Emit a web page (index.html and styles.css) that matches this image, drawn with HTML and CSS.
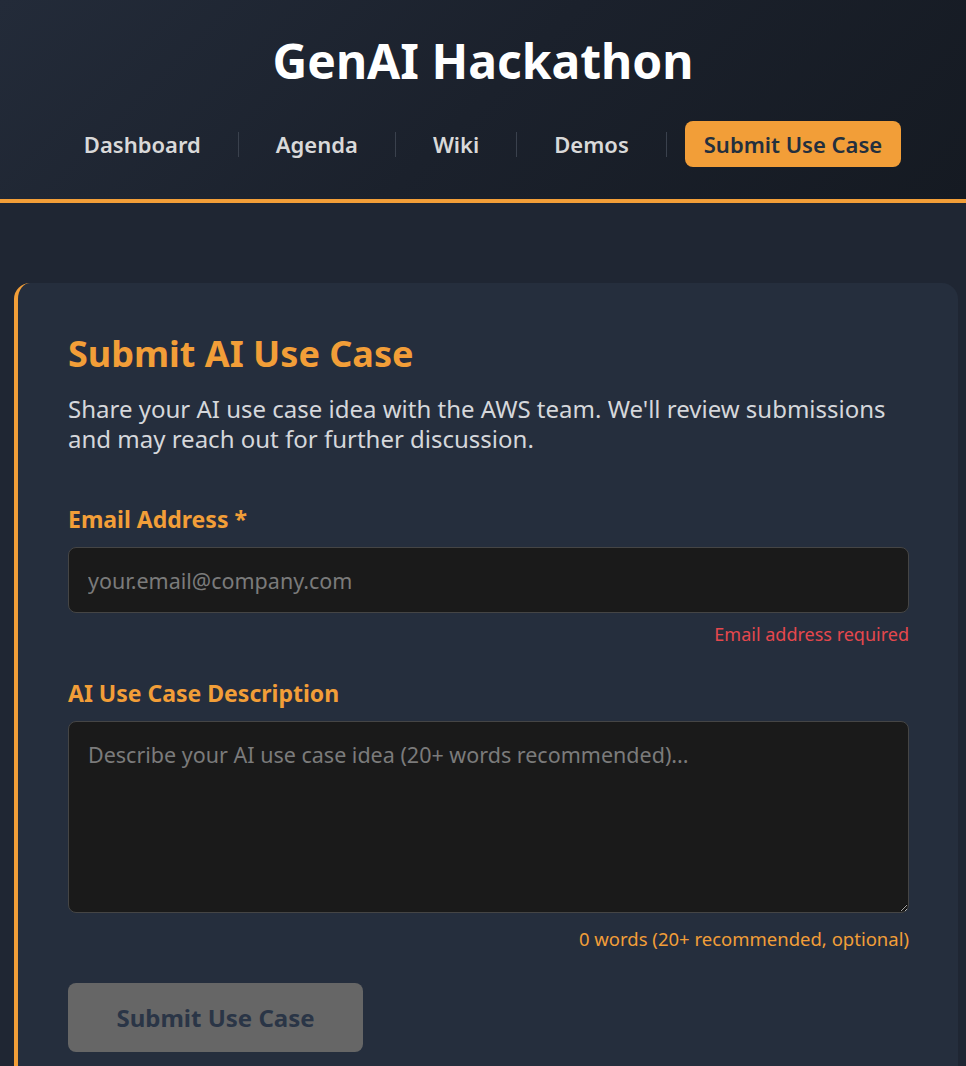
FILE: index.html
```html
<!DOCTYPE html>
<html lang="en">
<head>
<meta charset="utf-8">
<title>GenAI Hackathon - Submit Use Case</title>
<link rel="stylesheet" href="styles.css">
</head>
<body>
<header class="site-header">
  <h1 class="site-title">GenAI Hackathon</h1>
  <nav class="nav">
    <a class="nav-link" href="#">Dashboard</a>
    <span class="nav-sep"></span>
    <a class="nav-link" href="#">Agenda</a>
    <span class="nav-sep"></span>
    <a class="nav-link" href="#">Wiki</a>
    <span class="nav-sep"></span>
    <a class="nav-link" href="#">Demos</a>
    <span class="nav-sep"></span>
    <a class="nav-link nav-link-active" href="#">Submit Use Case</a>
  </nav>
</header>
<main class="main">
  <section class="card">
    <h2 class="card-title">Submit AI Use Case</h2>
    <p class="card-desc">Share your AI use case idea with the AWS team. We'll review submissions and may reach out for further discussion.</p>
    <form class="form">
      <div class="field">
        <label class="field-label" for="email">Email Address *</label>
        <input class="field-input" id="email" type="email" placeholder="your.email@company.com">
        <div class="field-hint field-error">Email address required</div>
      </div>
      <div class="field">
        <label class="field-label" for="desc">AI Use Case Description</label>
        <textarea class="field-textarea" id="desc" placeholder="Describe your AI use case idea (20+ words recommended)..."></textarea>
        <div class="field-hint field-count">0 words (20+ recommended, optional)</div>
      </div>
      <button class="submit-btn" type="button" disabled>Submit Use Case</button>
    </form>
  </section>
</main>
</body>
</html>
```
FILE: styles.css
```css
* { box-sizing: border-box; }
html, body { margin: 0; padding: 0; }
body {
  font-family: "Noto Sans", "Open Sans", sans-serif;
  background: #1f2633;
  color: #d6d8dc;
  min-height: 1066px;
}
.site-header {
  background: linear-gradient(135deg, #232b39 0%, #1b212c 50%, #151a22 100%);
  border-bottom: 4px solid #f29e38;
  height: 203px;
  padding-top: 30px;
  text-align: center;
}
.site-title {
  margin: 0;
  font-size: 48px;
  line-height: 62px;
  font-weight: 700;
  color: #ffffff;
}
.nav {
  margin-top: 29px;
  display: flex;
  justify-content: center;
  align-items: center;
  gap: 18px;
}
.nav-link {
  display: inline-block;
  padding: 0 19px;
  height: 46px;
  line-height: 46px;
  font-size: 22px;
  font-weight: 600;
  color: #d9d9d9;
  text-decoration: none;
  border-radius: 8px;
}
.nav-link-active {
  background: #f29e38;
  color: #232f3e;
}
.nav-sep {
  width: 1px;
  height: 25px;
  background: #3a414d;
}
.main {
  padding: 80px 8px 0 14px;
}
.card {
  background: #252e3d;
  border-left: 4px solid #f29e38;
  border-radius: 16px 16px 0 0;
  padding: 49px 49px 60px 50px;
}
.card-title {
  margin: 0;
  font-size: 36px;
  line-height: 44px;
  font-weight: 700;
  color: #f29e38;
}
.card-desc {
  margin: 18px 0 0;
  font-size: 24px;
  line-height: 30px;
  color: #d5d7db;
}
.form { margin-top: 50px; }
.field { margin-bottom: 33px; }
.field-label {
  display: block;
  font-size: 23px;
  font-weight: 700;
  line-height: 30px;
  color: #f29e38;
  margin-bottom: 13px;
}
.field-input, .field-textarea {
  display: block;
  width: 100%;
  background: #1a1a1a;
  border: 1px solid #454545;
  border-radius: 8px;
  color: #e0e0e0;
  font-family: inherit;
  font-size: 21.5px;
  padding: 0 19px;
}
.field-input { height: 66px; }
.field-textarea {
  height: 192px;
  padding-top: 18px;
  resize: vertical;
  line-height: 1.4;
}
.field-input::placeholder, .field-textarea::placeholder { color: #7b7b7b; }
.field-hint {
  text-align: right;
  font-size: 18.5px;
  line-height: 22px;
  margin-top: 10px;
}
.field-error { color: #e5484d; font-size: 18px; }
.field-count { color: #f29e38; margin-top: 15px; }
.submit-btn {
  display: block;
  width: 295px;
  height: 69px;
  margin-top: 20px;
  background: #666666;
  color: #2a3546;
  border: none;
  border-radius: 8px;
  font-family: inherit;
  font-size: 24px;
  font-weight: 700;
}
```
